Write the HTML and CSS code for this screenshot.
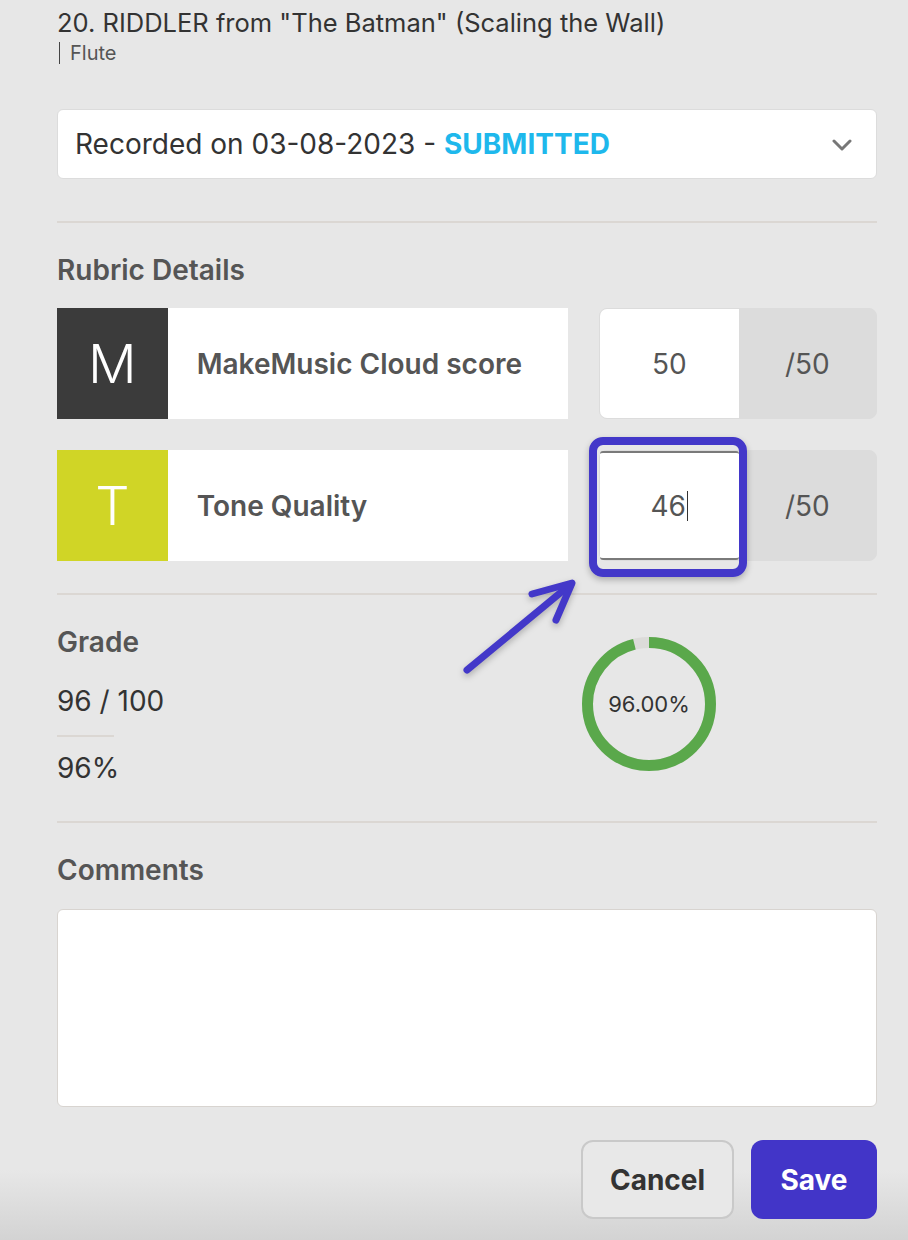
FILE: index.html
```html
<!DOCTYPE html>
<html lang="en">
<head>
    <meta charset="UTF-8">
    <meta name="viewport" content="width=device-width, initial-scale=1.0">
    <title>Grade Submission</title>
    <link rel="stylesheet" href="styles.css">
</head>
<body>
    <div class="page">
        <h1 class="piece-title">20. RIDDLER from "The Batman" (Scaling the Wall)</h1>
        <div class="instrument">Flute</div>

        <div class="recording-select">
            <span>Recorded on 03-08-2023 - <strong class="status">SUBMITTED</strong></span>
            <svg class="chevron" width="20" height="12" viewBox="0 0 20 12">
                <path d="M2 2 L10 10 L18 2" fill="none" stroke="#777" stroke-width="3" stroke-linecap="round" stroke-linejoin="round"/>
            </svg>
        </div>

        <hr class="divider">

        <h2 class="section-title">Rubric Details</h2>

        <div class="rubric-row">
            <div class="letter letter-dark">M</div>
            <div class="rubric-label">MakeMusic Cloud score</div>
            <div class="score">
                <div class="score-value">50</div>
                <div class="score-max">/50</div>
            </div>
        </div>

        <div class="rubric-row">
            <div class="letter letter-lime">T</div>
            <div class="rubric-label">Tone Quality</div>
            <div class="score">
                <div class="score-value score-focused">46<span class="caret"></span></div>
                <div class="score-max">/50</div>
                <!-- annotation highlight around the edited field -->
                <div class="highlight"></div>
            </div>
        </div>

        <hr class="divider">

        <div class="grade">
            <div class="grade-text">
                <h2 class="section-title">Grade</h2>
                <div class="grade-points">96 / 100</div>
                <div class="grade-rule"></div>
                <div class="grade-percent">96%</div>
            </div>
            <div class="donut">
                <svg width="134" height="134" viewBox="0 0 134 134">
                    <circle cx="67" cy="67" r="61.5" fill="none" stroke="#dcdbd9" stroke-width="11"/>
                    <circle cx="67" cy="67" r="61.5" fill="none" stroke="#5aa84b" stroke-width="11"
                            stroke-dasharray="371 387" transform="rotate(-90 67 67)"/>
                </svg>
                <span class="donut-label">96.00%</span>
            </div>
        </div>

        <hr class="divider">

        <h2 class="section-title">Comments</h2>
        <div class="comments"></div>

        <div class="actions">
            <button class="btn btn-cancel">Cancel</button>
            <button class="btn btn-save">Save</button>
        </div>

        <!-- annotation arrow -->
        <svg class="arrow" width="140" height="120" viewBox="0 0 140 120">
            <g fill="none" stroke="#4338c9" stroke-width="7" stroke-linecap="round" stroke-linejoin="round">
                <path d="M12 105 L116 19"/>
                <path d="M77 29 L117 18 L101 55"/>
            </g>
        </svg>
    </div>
</body>
</html>
```

FILE: styles.css
```css
/* Base */
body, h1, h2, hr, button {
    margin: 0;
    padding: 0;
}

html {
    background: linear-gradient(to bottom, #e7e7e7 0, #e7e7e7 1170px, #d3d3d3 1240px);
    min-height: 1240px;
}

body {
    font-family: Inter, "Noto Sans", sans-serif;
    color: #333;
}

.page {
    position: relative;
    width: 820px;
    padding: 8px 31px 0 57px;
}

/* Heading */
.piece-title {
    font-size: 25.5px;
    font-weight: 400;
    line-height: 30px;
    color: #333;
}

.instrument {
    display: inline-block;
    margin: 4px 0 0 2px;
    padding-left: 10px;
    border-left: 1px solid #444;
    font-size: 20px;
    line-height: 22px;
    color: #555;
}

/* Recording dropdown */
.recording-select {
    display: flex;
    align-items: center;
    justify-content: space-between;
    height: 68px;
    margin-top: 45px;
    padding: 0 24px 0 17px;
    background-color: #fff;
    border: 1px solid #dcdcdc;
    border-radius: 6px;
    font-size: 28px;
    color: #333;
}

.status {
    font-weight: 700;
    color: #1eb8ec;
}

.chevron {
    margin-top: 2px;
}

.divider {
    border: none;
    border-top: 2px solid #dbd7d3;
    margin: 42px 0 0;
}

.section-title {
    margin-top: 31px;
    font-size: 28px;
    font-weight: 600;
    line-height: 32px;
    color: #555;
}

/* Rubric rows */
.rubric-row {
    display: flex;
    height: 111px;
    margin-top: 22px;
}

.rubric-row + .rubric-row {
    margin-top: 31px;
}

.rubric-row + .divider {
    margin-top: 32px;
}

.letter {
    display: flex;
    align-items: center;
    justify-content: center;
    width: 111px;
    font-size: 54px;
    font-weight: 300;
    color: #fff;
}

.letter-dark {
    background-color: #3b3b3b;
}

.letter-lime {
    background-color: #d0d526;
}

.rubric-label {
    display: flex;
    align-items: center;
    width: 372px;
    padding-left: 29px;
    background-color: #fff;
    font-size: 28px;
    font-weight: 600;
    color: #555;
}

.score {
    position: relative;
    display: flex;
    width: 277px;
    margin-left: 31px;
    border: 1px solid #dcdcdc;
    border-radius: 8px;
    background-color: #dcdcdc;
    font-size: 28px;
    color: #555;
}

.score-value {
    display: flex;
    align-items: center;
    justify-content: center;
    width: 139px;
    background-color: #fff;
    border-radius: 7px 0 0 7px;
}

.score-focused {
    border-top: 2px solid #7a7a7a;
    border-bottom: 2px solid #7a7a7a;
    border-radius: 3px;
}

.caret {
    display: inline-block;
    width: 1px;
    height: 30px;
    margin-left: 1px;
    background-color: #333;
}

.score-max {
    display: flex;
    align-items: center;
    justify-content: center;
    flex: 1;
}

.highlight {
    position: absolute;
    left: -11px;
    top: -14px;
    width: 142px;
    height: 124px;
    border: 8px solid #4338c9;
    border-radius: 14px;
    box-shadow: 0 3px 6px rgba(0, 0, 0, 0.25);
}

.arrow {
    position: absolute;
    left: 455px;
    top: 565px;
    filter: drop-shadow(0 3px 3px rgba(0, 0, 0, 0.25));
}

/* Grade */
.grade {
    display: flex;
    align-items: flex-start;
}

.grade-text {
    width: 525px;
}

.grade-points {
    margin-top: 26px;
    font-size: 28px;
    line-height: 34px;
}

.grade-rule {
    width: 57px;
    height: 2px;
    margin-top: 17px;
    background-color: #dbd7d3;
}

.grade-percent {
    margin-top: 14px;
    font-size: 28px;
    line-height: 34px;
}

.grade + .divider {
    margin-top: 36px;
}

.donut {
    position: relative;
    width: 134px;
    height: 134px;
    margin-top: 42px;
}

.donut svg {
    display: block;
}

.donut-label {
    position: absolute;
    inset: 0;
    display: flex;
    align-items: center;
    justify-content: center;
    font-size: 22px;
    color: #333;
}

/* Comments */
.comments {
    height: 196px;
    margin-top: 23px;
    background-color: #fff;
    border: 1px solid #d8d4d0;
    border-radius: 6px;
}

/* Buttons */
.actions {
    display: flex;
    justify-content: flex-end;
    gap: 17px;
    margin-top: 33px;
}

.btn {
    height: 79px;
    border-radius: 12px;
    font-family: Inter, "Noto Sans", sans-serif;
    font-size: 28px;
    font-weight: 700;
    cursor: pointer;
}

.btn-cancel {
    width: 153px;
    background-color: #e8e8e8;
    border: 2px solid #c9c9c9;
    color: #333;
}

.btn-save {
    width: 126px;
    background-color: #4235c8;
    border: none;
    color: #fff;
}
```
